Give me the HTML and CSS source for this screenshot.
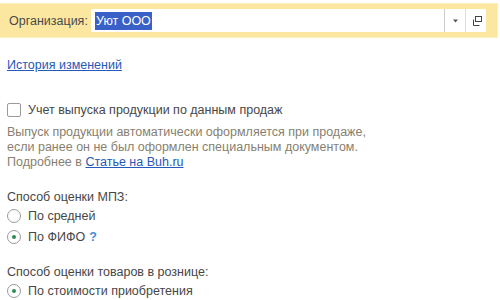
FILE: index.html
```html
<!DOCTYPE html>
<html lang="ru">
<head>
    <meta charset="UTF-8">
    <title>Учетная политика</title>
    <link rel="stylesheet" href="styles.css">
</head>
<body>
    <!-- Organization selector -->
    <div class="org-bar">
        <span class="org-label">Организация:</span>
        <div class="org-field">
            <span class="org-value"><span class="selected">Уют ООО</span></span>
            <span class="field-btn drop">
                <svg width="7" height="4" viewBox="0 0 7 4"><path d="M1 0.5h5L3.5 3.5z" fill="#555"/></svg>
            </span>
            <span class="field-btn open">
                <svg width="11" height="10" viewBox="0 0 11 10">
                    <rect x="4.5" y="0.5" width="6" height="5" fill="none" stroke="#444"/>
                    <path d="M2.5 3.5v6h6" fill="none" stroke="#444"/>
                </svg>
            </span>
        </div>
    </div>

    <div class="content">
        <a class="link history" href="#">История изменений</a>

        <label class="check-row">
            <span class="checkbox"></span>
            Учет выпуска продукции по данным продаж
        </label>
        <p class="note">Выпуск продукции автоматически оформляется при продаже,<br>
            если ранее он не был оформлен специальным документом.<br>
            Подробнее в <a class="link" href="#">Статье на Buh.ru</a></p>

        <div class="group">
            <div class="group-title">Способ оценки МПЗ:</div>
            <div class="radio-row"><span class="radio"></span>По средней</div>
            <div class="radio-row"><span class="radio on"></span>По ФИФО <span class="hint">?</span></div>
        </div>

        <div class="group">
            <div class="group-title">Способ оценки товаров в рознице:</div>
            <div class="radio-row"><span class="radio on"></span>По стоимости приобретения</div>
        </div>
    </div>
</body>
</html>
```

FILE: styles.css
```css
body {
    margin: 0;
    background: #fff;
    font-family: Arial, "Liberation Sans", sans-serif;
    font-size: 12.5px;
    color: #474747;
}
.org-bar {
    display: flex;
    align-items: center;
    margin: 3px 2px 0 0;
    height: 33px;
    padding: 0 11px 0 9px;
    background: #fbe7a0;
    border: 1px solid #fcefc2;
    border-left: none;
}
.org-label {
    flex: none;
    width: 82px;
    color: #4a4a4a;
}
.org-field {
    flex: 1;
    display: flex;
    align-items: stretch;
    height: 23px;
    background: #fff;
}
.org-value {
    flex: 1;
    display: flex;
    align-items: center;
    padding-left: 4px;
}
.selected {
    background: #3960c7;
    color: #fff;
    padding: 2px 1px;
}
.field-btn {
    width: 20px;
    display: flex;
    align-items: center;
    justify-content: center;
    border-left: 1px solid #ccc;
}
.field-btn.open {
    border-left-color: #ddd;
}
.content {
    padding: 0 7px;
}
.link {
    color: #2659b8;
    text-decoration: underline;
}
.history {
    display: inline-block;
    margin-top: 20px;
}
.check-row {
    display: flex;
    align-items: center;
    gap: 7px;
    margin-top: 31px;
}
.checkbox {
    width: 12px;
    height: 12px;
    border: 1px solid #9a9a9a;
    border-radius: 2px;
    background: #fff;
}
.note {
    margin: 8px 0 0;
    line-height: 15px;
    color: #877f70;
}
.group {
    margin-top: 19px;
}
.group + .group {
    margin-top: 17px;
}
.group-title {
    line-height: 16px;
}
.radio-row {
    display: flex;
    align-items: center;
    gap: 7px;
    height: 21px;
}
.radio {
    position: relative;
    width: 12px;
    height: 12px;
    border: 1px solid #9a9a9a;
    border-radius: 50%;
}
.radio.on::after {
    content: "";
    position: absolute;
    left: 4px;
    top: 4px;
    width: 4px;
    height: 4px;
    border-radius: 50%;
    background: #2d8a55;
}
.hint {
    margin-left: -3px;
    color: #3f8ed2;
    font-weight: bold;
}
```
